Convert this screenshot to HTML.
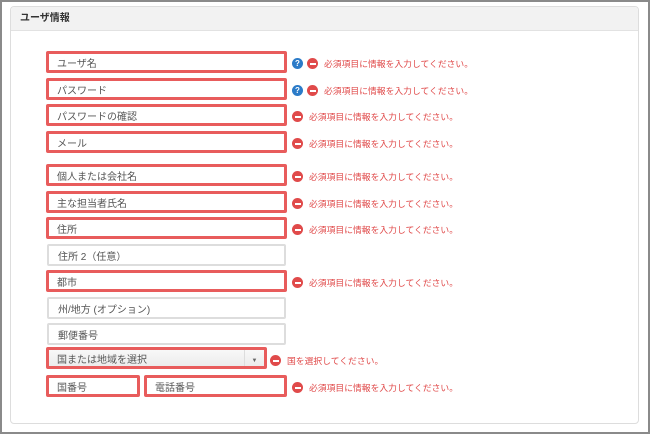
<!DOCTYPE html>
<html><head><meta charset="utf-8"><style>
*{box-sizing:border-box;margin:0;padding:0}
body{width:650px;height:434px;background:#fff;position:relative;overflow:hidden;font-family:"Liberation Sans","Noto Sans CJK JP",sans-serif}
.frame{position:absolute;left:0;top:0;width:650px;height:434px;border:2px solid #8a8a8a;pointer-events:none}
.panel{position:absolute;left:10px;top:6px;width:629px;height:418px;border:1px solid #ddd;border-radius:4px;background:#fff}
.hd{height:24px;background:#f2f2f2;border-bottom:1px solid #e2e2e2;font-size:10px;line-height:10px;font-weight:bold;color:#333;padding:7px 0 0 9px;border-radius:4px 4px 0 0}
.f{position:absolute;height:22px;border:3px solid #e85c5c;border-radius:2px;font-size:10px;line-height:10px;color:#555;padding:6px 0 0 8px;background:#fff}
.g{border:2px solid #ddd;padding:7px 0 0 9px}
.sel{background:linear-gradient(#f8f8f8,#ececec)}
.arr{position:absolute;right:0;top:0;width:20px;height:100%;border-left:1px solid #ddd;font-size:6px;color:#666;text-align:center;padding-top:6px}
.ic{position:absolute;width:11px;height:11px;border-radius:50%;color:#fff;font-size:8px;font-weight:bold;text-align:center;line-height:11px}
.q{background:#2b7bc8}
.m{background:#e04a4a}
.m::after{content:"";position:absolute;left:2.5px;top:4.5px;width:6px;height:2px;background:#fff}
.t{position:absolute;font-size:8.8px;line-height:10px;color:#e04a4a;white-space:nowrap}
</style></head><body>
<div class="panel"><div class="hd">ユーザ情報</div></div>

<div class="f" style="left:46px;top:51px;width:241px">ユーザ名</div>
<div class="ic q" style="left:292px;top:58px">?</div><div class="ic m" style="left:307px;top:58px"></div><div class="t" style="left:324px;top:59px">必須項目に情報を入力してください。</div>

<div class="f" style="left:46px;top:78px;width:241px">パスワード</div>
<div class="ic q" style="left:292px;top:85px">?</div><div class="ic m" style="left:307px;top:85px"></div><div class="t" style="left:324px;top:86px">必須項目に情報を入力してください。</div>

<div class="f" style="left:46px;top:104px;width:241px">パスワードの確認</div>
<div class="ic m" style="left:292px;top:111px"></div><div class="t" style="left:309px;top:112px">必須項目に情報を入力してください。</div>

<div class="f" style="left:46px;top:131px;width:241px">メール</div>
<div class="ic m" style="left:292px;top:138px"></div><div class="t" style="left:309px;top:139px">必須項目に情報を入力してください。</div>

<div class="f" style="left:46px;top:164px;width:241px">個人または会社名</div>
<div class="ic m" style="left:292px;top:171px"></div><div class="t" style="left:309px;top:172px">必須項目に情報を入力してください。</div>

<div class="f" style="left:46px;top:191px;width:241px">主な担当者氏名</div>
<div class="ic m" style="left:292px;top:198px"></div><div class="t" style="left:309px;top:199px">必須項目に情報を入力してください。</div>

<div class="f" style="left:46px;top:217px;width:241px">住所</div>
<div class="ic m" style="left:292px;top:224px"></div><div class="t" style="left:309px;top:225px">必須項目に情報を入力してください。</div>

<div class="f g" style="left:47px;top:244px;width:239px">住所 2（任意）</div>

<div class="f" style="left:46px;top:270px;width:241px">都市</div>
<div class="ic m" style="left:292px;top:277px"></div><div class="t" style="left:309px;top:278px">必須項目に情報を入力してください。</div>

<div class="f g" style="left:47px;top:297px;width:239px">州/地方 (オプション)</div>
<div class="f g" style="left:47px;top:323px;width:239px">郵便番号</div>

<div class="f sel" style="left:46px;top:347px;width:221px">国または地域を選択<div class="arr">▼</div></div>
<div class="ic m" style="left:270px;top:355px"></div><div class="t" style="left:287px;top:356px">国を選択してください。</div>

<div class="f" style="left:46px;top:375px;width:94px">国番号</div>
<div class="f" style="left:144px;top:375px;width:143px">電話番号</div>
<div class="ic m" style="left:292px;top:382px"></div><div class="t" style="left:309px;top:383px">必須項目に情報を入力してください。</div>
<div class="frame"></div>
</body></html>
